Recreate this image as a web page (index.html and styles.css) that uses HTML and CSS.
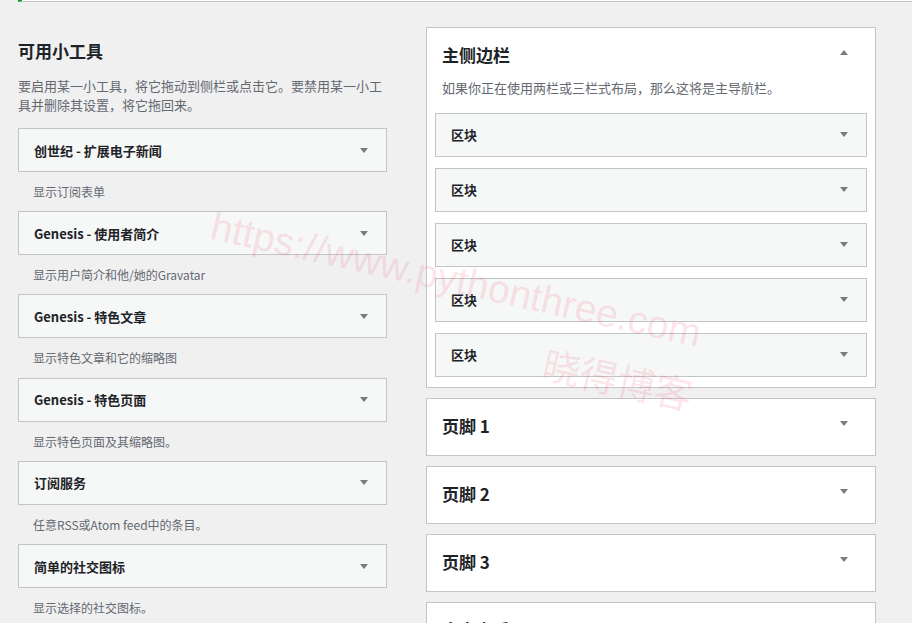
FILE: index.html
```html
<!DOCTYPE html>
<html lang="zh-CN">
<head>
    <meta charset="UTF-8">
    <meta name="viewport" content="width=device-width, initial-scale=1.0">
    <title>小工具</title>
    <link rel="stylesheet" href="styles.css">
</head>
<body>
    <div class="notice"></div>

    <div class="widgets-wrap">
        <div class="available-widgets">
            <h2>可用小工具</h2>
            <p class="intro">要启用某一小工具，将它拖动到侧栏或点击它。要禁用某一小工具并删除其设置，将它拖回来。</p>

            <div class="widget">
                <div class="widget-top"><span class="widget-title">创世纪 - 扩展电子新闻</span><span class="arrow"></span></div>
                <p class="widget-description">显示订阅表单</p>
            </div>
            <div class="widget">
                <div class="widget-top"><span class="widget-title">Genesis - 使用者简介</span><span class="arrow"></span></div>
                <p class="widget-description">显示用户简介和他/她的Gravatar</p>
            </div>
            <div class="widget">
                <div class="widget-top"><span class="widget-title">Genesis - 特色文章</span><span class="arrow"></span></div>
                <p class="widget-description">显示特色文章和它的缩略图</p>
            </div>
            <div class="widget">
                <div class="widget-top"><span class="widget-title">Genesis - 特色页面</span><span class="arrow"></span></div>
                <p class="widget-description">显示特色页面及其缩略图。</p>
            </div>
            <div class="widget">
                <div class="widget-top"><span class="widget-title">订阅服务</span><span class="arrow"></span></div>
                <p class="widget-description">任意RSS或Atom feed中的条目。</p>
            </div>
            <div class="widget">
                <div class="widget-top"><span class="widget-title">简单的社交图标</span><span class="arrow"></span></div>
                <p class="widget-description">显示选择的社交图标。</p>
            </div>
        </div>

        <div class="sidebars">
            <div class="sidebar open">
                <div class="sidebar-name">
                    <h3>主侧边栏</h3>
                    <span class="arrow up"></span>
                </div>
                <p class="sidebar-description">如果你正在使用两栏或三栏式布局，那么这将是主导航栏。</p>
                <div class="sidebar-widgets">
                    <div class="widget-top"><span class="widget-title">区块</span><span class="arrow"></span></div>
                    <div class="widget-top"><span class="widget-title">区块</span><span class="arrow"></span></div>
                    <div class="widget-top"><span class="widget-title">区块</span><span class="arrow"></span></div>
                    <div class="widget-top"><span class="widget-title">区块</span><span class="arrow"></span></div>
                    <div class="widget-top"><span class="widget-title">区块</span><span class="arrow"></span></div>
                </div>
            </div>
            <div class="sidebar">
                <div class="sidebar-name"><h3>页脚 1</h3><span class="arrow"></span></div>
            </div>
            <div class="sidebar">
                <div class="sidebar-name"><h3>页脚 2</h3><span class="arrow"></span></div>
            </div>
            <div class="sidebar">
                <div class="sidebar-name"><h3>页脚 3</h3><span class="arrow"></span></div>
            </div>
            <div class="sidebar">
                <div class="sidebar-name"><h3>文章之后</h3><span class="arrow"></span></div>
            </div>
        </div>
    </div>

    <div class="watermark wm-url">https://www.pythonthree.com</div>
    <div class="watermark wm-name">晓得博客</div>
</body>
</html>
```

FILE: styles.css
```css
body {
    margin: 0;
    background-color: #f0f0f1;
    color: #1d2327;
    font-family: "Noto Sans CJK SC", "Noto Sans", sans-serif;
    font-size: 13px;
    overflow: hidden;
}

.notice {
    margin-left: 18px;
    height: 1px;
    background-color: #fff;
    border-left: 4px solid #00a32a;
    border-bottom: 1px solid #c3c4c7;
}

.widgets-wrap {
    display: flex;
    align-items: flex-start;
    gap: 39px;
    padding-left: 18px;
}

.available-widgets {
    width: 369px;
    flex-shrink: 0;
}

.available-widgets h2 {
    margin: 37px 0 0;
    font-size: 17px;
    line-height: 24px;
    font-weight: 700;
}

.intro {
    margin: 13px 0 14px;
    line-height: 19px;
    color: #646970;
}

.widget-top {
    display: flex;
    align-items: center;
    justify-content: space-between;
    box-sizing: border-box;
    height: 44px;
    padding: 0 18px 0 15px;
    background-color: #f6f7f7;
    border: 1px solid #c3c4c7;
}

.widget-title {
    font-weight: 700;
    font-size: 13px;
}

.widget-description {
    margin: 0;
    padding: 10px 15px;
    font-size: 12px;
    line-height: 19.2px;
    color: #646970;
}

.arrow {
    width: 0;
    height: 0;
    border-left: 4px solid transparent;
    border-right: 4px solid transparent;
    border-top: 5px solid #787c82;
}

.arrow.up {
    border-top: 0;
    border-bottom: 5px solid #787c82;
}

.sidebars {
    width: 450px;
    flex-shrink: 0;
    margin-top: 25px;
}

.sidebar {
    background-color: #fff;
    border: 1px solid #c3c4c7;
    margin-bottom: 10px;
}

.sidebar-name {
    display: flex;
    justify-content: space-between;
    align-items: flex-start;
    padding: 15px 27px 17px 15px;
}

.sidebar.open .sidebar-name {
    padding-bottom: 0;
}

.sidebar-name h3 {
    margin: 0;
    font-size: 17px;
    line-height: 24px;
    font-weight: 700;
}

.sidebar-name .arrow {
    margin-top: 7px;
}

.sidebar-description {
    margin: 11px 15px 0;
    line-height: 19.5px;
    color: #646970;
}

.sidebar-widgets {
    display: flex;
    flex-direction: column;
    gap: 11px;
    padding: 15px 8px 10px;
}

.watermark {
    position: absolute;
    white-space: nowrap;
    color: rgba(235, 60, 90, 0.15);
    pointer-events: none;
    transform: translate(-50%, -50%) rotate(12.5deg);
}

.wm-url {
    left: 456px;
    top: 280px;
    font-family: "Liberation Sans", sans-serif;
    font-size: 39px;
}

.wm-name {
    left: 618px;
    top: 378px;
    font-family: "Noto Sans CJK SC", sans-serif;
    font-size: 38px;
}
```
